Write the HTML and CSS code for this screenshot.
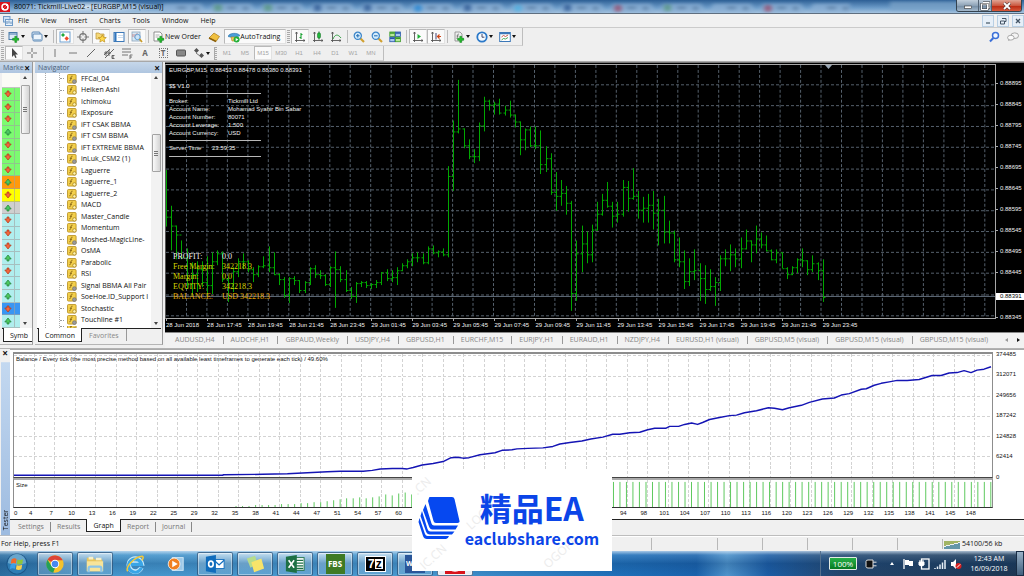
FILE: index.html
```html
<!DOCTYPE html>
<html lang="en">
<head>
<meta charset="utf-8">
<title>80071: Tickmill-Live02 - [EURGBP,M15 (visual)]</title>
<link rel="stylesheet" href="styles.css">
</head>
<body>
<svg class="defs" aria-hidden="true">
  <defs>
    <symbol id="fx" viewBox="0 0 10 10"><rect x=".5" y=".5" width="8.6" height="8.6" rx="1" fill="#f3cf4c" stroke="#b58d1c" stroke-width=".8"/><path d="M5.6 2.2c-1.4-.5-1.5.8-1.7 2.2S3.400 7.200 2.300 6.800M2.800 4.300h2.200" fill="none" stroke="#7a5a10" stroke-width=".8"/><circle cx="7.400" cy="7.400" r="1.700" fill="#fff3b0" stroke="#a07c18" stroke-width=".7"/></symbol>
    <symbol id="fxg" viewBox="0 0 10 10"><rect x=".5" y=".5" width="8.600" height="8.600" rx="1" fill="#f3cf4c" stroke="#b58d1c" stroke-width=".8"/><path d="M5.600 2.200c-1.400-.5-1.500.8-1.700 2.200S3.400 7.200 2.300 6.800M2.800 4.300h2.200" fill="none" stroke="#7a5a10" stroke-width=".8"/><circle cx="7.400" cy="7.600" r="1.900" fill="#9a9a9a" stroke="#6d6d6d" stroke-width=".6"/></symbol>
    <symbol id="dn" viewBox="0 0 8 8"><path d="M3 1h2v2h2.200L4 7 .8 3H3z" fill="#f4663c" stroke="#b03818" stroke-width=".7"/></symbol>
    <symbol id="up" viewBox="0 0 8 8"><path d="M3 7h2V5h2.200L4 1 .8 5H3z" fill="#4cc860" stroke="#1f8038" stroke-width=".7"/></symbol>
    <symbol id="plus" viewBox="0 0 12 12"><path d="M4.500 1h3v3.500H11v3H7.500V11h-3V7.500H1v-3h3.500z" fill="#22c02c" stroke="#0c7a16" stroke-width=".8"/></symbol>
    <symbol id="axes" viewBox="0 0 12 12"><path d="M2.500 1v10M1 9.500h10M1.500 2.500l1-1.500 1 1.500M9.500 8.500l1.500 1-1.500 1" fill="none" stroke="#555" stroke-width=".9"/></symbol>
  </defs>
</svg>

<div class="window">
  <header class="titlebar">
    <svg class="glass" viewBox="0 0 1024 14" preserveAspectRatio="none" aria-hidden="true">
      <defs><pattern id="tabs" x="158" width="50" height="14" patternUnits="userSpaceOnUse"><path d="M1 14L5 4h38l5 10z" fill="#8fb2d6"/><path d="M19 7h9v3h-9zM35 7h5v4h-5z" fill="#5f7fa3"/></pattern></defs>
      <g class="soft"><rect x="158" width="692" height="14" fill="url(#tabs)"/>
      <path d="M890 2h70v9h-70z" fill="#7ba3c8"/>
      <g fill="#2c5590"><rect x="314" y="5" width="7" height="7"/><rect x="364" y="5" width="7" height="7"/><rect x="464" y="5" width="7" height="7"/><rect x="564" y="5" width="7" height="7"/></g>
      <g fill="#5c9a7c"><rect x="214" y="5" width="8" height="7"/><rect x="264" y="5" width="8" height="7"/><rect x="664" y="5" width="7" height="7"/></g>
      <circle cx="418" cy="9" r="4" fill="#2388d8"/><circle cx="518" cy="9" r="4" fill="#51b7e8"/><circle cx="768" cy="9" r="4" fill="#a04a68"/><circle cx="618" cy="9" r="4" fill="#a04a68"/></g>
    </svg>
    <svg class="applogo" viewBox="0 0 10 10" aria-hidden="true"><rect width="10" height="10" fill="#d8141c"/><circle cx="5" cy="5" r="3" fill="none" stroke="#fff" stroke-width="1.500"/><path d="M5 5l3-3M5 5L2.500 7.500" stroke="#fff"/><circle cx="5" cy="5" r="1" fill="#d8141c"/></svg>
    <h1 class="title">80071: Tickmill-Live02 - [EURGBP,M15 (visual)]</h1>
    <div class="winbtns">
      <button class="wb wmin" aria-label="Minimize"><svg viewBox="0 0 12 10"><rect x="2.500" y="5" width="7" height="2.500" fill="#fff" stroke="#333" stroke-width=".6"/></svg></button>
      <button class="wb wmax" aria-label="Restore"><svg viewBox="0 0 12 10"><path d="M4 1.500h6v5.500H8.500M2.500 3h6v5.500h-6z" fill="none" stroke="#333" stroke-width="2"/><path d="M4 1.500h6v5.500H8.500M2.500 3h6v5.500h-6z" fill="none" stroke="#fff" stroke-width="1.100"/></svg></button>
      <button class="wb wclose" aria-label="Close"><svg viewBox="0 0 12 10"><path d="M3 2l6 6M9 2L3 8" stroke="#433" stroke-width="3"/><path d="M3 2l6 6M9 2L3 8" stroke="#fff" stroke-width="1.800"/></svg></button>
    </div>
  </header>

  <nav class="menubar" aria-label="Main menu">
    <svg class="menuicon" viewBox="0 0 10 10" aria-hidden="true"><rect x=".5" y=".5" width="6.500" height="5.500" fill="#cfe2f5" stroke="#6f9bc8"/><rect x="2.500" y="3.500" width="7" height="6" fill="#e9f3fc" stroke="#6f9bc8"/><path d="M4 5v3M6 4.500v3M8 5.500v2.500" stroke="#3a6ea8" stroke-width=".8"/></svg>
    <button>File</button><button>View</button><button>Insert</button><button>Charts</button><button>Tools</button><button>Window</button><button>Help</button>
    <div class="mdi"><button aria-label="Minimize chart"><svg viewBox="0 0 10 10"><path d="M3 7h4" stroke="#456" stroke-width="1.200"/></svg></button><button aria-label="Restore chart"><svg viewBox="0 0 10 10"><path d="M4 2.500h4v3H7M2.500 5h4v3h-4z" fill="none" stroke="#456"/></svg></button><button aria-label="Close chart"><svg viewBox="0 0 10 10"><path d="M3 3l4 4M7 3L3 7" stroke="#456" stroke-width="1.300"/></svg></button></div>
  </nav>

  <div class="toolbar t1">
    <div class="strip">
      <i class="grip"></i>
      <button class="tb dd" aria-label="New chart"><svg viewBox="0 0 12 12"><rect x="1" y="1.500" width="8" height="7" fill="#dcebf8" stroke="#4a7ba8"/><path d="M1 3h8" stroke="#4a7ba8"/><use href="#plus" x="4" y="4.500" width="7.500" height="7.500"/></svg></button>
      <button class="tb dd" aria-label="Profiles"><svg viewBox="0 0 12 12"><rect x="1" y="1" width="8" height="6" rx="1" fill="#d7e6f5" stroke="#5c88b5"/><rect x="2" y="3" width="9" height="7" rx="1" fill="#edf5fc" stroke="#5c88b5"/><path d="M3 9h7" stroke="#86aacd" stroke-width="1.500"/></svg></button>
      <i class="sep"></i>
      <button class="tb on" aria-label="Market Watch"><svg viewBox="0 0 12 12"><rect x="1" y="1" width="10" height="10" fill="#fff" stroke="#6fa0d0"/><path d="M2 4l2-2 2 2-2 2z" fill="#20a83c"/><path d="M5.500 7.500l2.200-2.200 2.200 2.200-2.200 2.200z" fill="#f04828"/></svg></button>
      <button class="tb" aria-label="Data Window"><svg viewBox="0 0 12 12"><circle cx="6" cy="6" r="3.300" fill="none" stroke="#777" stroke-width="1.200"/><path d="M6 0v4.500M6 7.500V12M0 6h4.500M7.500 6H12" stroke="#777" stroke-width="1.100"/></svg></button>
      <button class="tb on" aria-label="Navigator"><svg viewBox="0 0 12 12"><path d="M1 2h3l1 1h4v5H1z" fill="#f5d878" stroke="#b8923a" stroke-width=".7"/><path d="M7.300 3.800l1.200 2.500 2.800.3-2.100 1.800.6 2.700-2.500-1.400-2.500 1.400.6-2.700-2.100-1.800 2.800-.3z" fill="#ffd84a" stroke="#b0820e" stroke-width=".6"/></svg></button>
      <button class="tb" aria-label="Terminal"><svg viewBox="0 0 12 12"><rect x="1" y="1.500" width="10" height="9" fill="#fff" stroke="#3c78b8"/><path d="M1.500 2h2v8h-2z" fill="#2f74bd"/><path d="M5 4.500h5M5 6.500h5" stroke="#cde"/></svg></button>
      <button class="tb on" aria-label="Strategy Tester"><svg viewBox="0 0 12 12"><rect x="1" y="1" width="8" height="9" fill="#d8e8f4" stroke="#8ba4bc" stroke-width=".8"/><path d="M2 6V3M4 7V3M6 5V2" stroke="#c86a6a" stroke-width=".7"/><circle cx="6.500" cy="6" r="2.700" fill="#c8e4fa" fill-opacity=".8" stroke="#5c9ad0" stroke-width=".9"/><path d="M8.500 8l2.500 3" stroke="#c89a28" stroke-width="1.800"/></svg></button>
      <i class="sep"></i>
      <button class="tb txt"><svg viewBox="0 0 12 12"><path d="M1 1h6l2 2v7H1z" fill="#fff" stroke="#777" stroke-width=".8"/><path d="M2.500 4h4M2.500 6h3" stroke="#999" stroke-width=".8"/><use href="#plus" x="4" y="4.500" width="7.500" height="7.500"/></svg>New Order</button>
      <button class="tb gold" aria-label="MetaEditor"><svg viewBox="0 0 12 12"><path d="M1 7l5-5 5.500 3.500L8 10.500z" fill="#f0c040" stroke="#a87814" stroke-width=".7"/><path d="M1 7l7 3.500" stroke="#8a5f0c" stroke-width="1.500"/></svg></button>
      <button class="tb txt on auto"><svg viewBox="0 0 12 12"><path d="M0 5.500C1 2 9 1 12 4.500L7 7z" fill="#4a9ed8" stroke="#2a6ea8" stroke-width=".6"/><path d="M3 6h6v4H4z" fill="#f0c95a" stroke="#a8842a" stroke-width=".6"/><circle cx="8.600" cy="8.600" r="3" fill="#22b038"/><path d="M7.700 7l2.600 1.600-2.600 1.600z" fill="#fff"/></svg>AutoTrading</button>
      <i class="grip"></i>
      <button class="tb on" aria-label="Bar Chart"><svg viewBox="0 0 12 12"><use href="#axes"/><path d="M7 2v6M5.500 6.500H7M7 3.500h1.500" stroke="#18a030" stroke-width="1.100"/></svg></button>
      <button class="tb" aria-label="Candlesticks"><svg viewBox="0 0 12 12"><use href="#axes"/><path d="M7 .5v8" stroke="#106a20"/><rect x="5.500" y="2" width="3" height="5" rx="1" fill="#20b83a" stroke="#106a20" stroke-width=".5"/></svg></button>
      <button class="tb" aria-label="Line Chart"><svg viewBox="0 0 12 12"><use href="#axes"/><path d="M3 8c2-5 5-5 8-1" fill="none" stroke="#38a048"/></svg></button>
      <i class="sep"></i>
      <button class="tb" aria-label="Zoom In"><svg viewBox="0 0 12 12"><path d="M7 7l4 4" stroke="#d0a030" stroke-width="2.200"/><circle cx="4.800" cy="4.800" r="3.600" fill="#d5ecfb" stroke="#3b84c8" stroke-width="1.200"/><path d="M3 4.800h3.600M4.800 3v3.600" stroke="#2a72b8" stroke-width="1.100"/></svg></button>
      <button class="tb" aria-label="Zoom Out"><svg viewBox="0 0 12 12"><path d="M7 7l4 4" stroke="#d0a030" stroke-width="2.200"/><circle cx="4.800" cy="4.800" r="3.600" fill="#d5ecfb" stroke="#3b84c8" stroke-width="1.200"/><path d="M3 4.800h3.600" stroke="#2a72b8" stroke-width="1.100"/></svg></button>
      <button class="tb" aria-label="Tile Windows"><svg viewBox="0 0 12 12"><g stroke-width=".8"><rect x=".8" y="1" width="5" height="4.500" fill="#b8e89a" stroke="#3b9a28"/><rect x="6.400" y="1" width="5" height="4.500" fill="#a8c8f0" stroke="#2858a8"/><rect x=".8" y="6.200" width="5" height="4.500" fill="#a8c8f0" stroke="#2858a8"/><rect x="6.400" y="6.200" width="5" height="4.500" fill="#b8e89a" stroke="#3b9a28"/></g><path d="M1 2h4.600M6.600 7.200h4.600" stroke="#3b9a28" stroke-width="1.500"/><path d="M6.600 2h4.600M1 7.200h4.600" stroke="#2858a8" stroke-width="1.500"/></svg></button>
      <i class="sep"></i>
      <button class="tb on" aria-label="Auto Scroll"><svg viewBox="0 0 12 12"><use href="#axes"/><path d="M5.500 3v5L9 5.500z" fill="#20b038"/></svg></button>
      <button class="tb on" aria-label="Chart Shift"><svg viewBox="0 0 12 12"><use href="#axes"/><path d="M6 2v6.500" stroke="#447"/><path d="M11 5.500H8M9.500 3.500l-2 2 2 2" fill="none" stroke="#d04818" stroke-width="1.200"/></svg></button>
      <i class="sep"></i>
      <button class="tb dd" aria-label="Indicators"><svg viewBox="0 0 12 12"><path d="M2 1h5l2 2v7H2z" fill="#eee" stroke="#888" stroke-width=".8"/><path d="M6 3c-2-.5-1 4-2.500 5M3.500 5h2" fill="none" stroke="#666" stroke-width=".8"/><use href="#plus" x="4" y="4.500" width="7.500" height="7.500"/></svg></button>
      <button class="tb dd" aria-label="Periods"><svg viewBox="0 0 12 12"><circle cx="6" cy="6" r="4.700" fill="#f4faff" stroke="#2a78c8" stroke-width="1.800"/><path d="M6 3v3.200h2.400" fill="none" stroke="#335" stroke-width=".9"/></svg></button>
      <button class="tb dd" aria-label="Templates"><svg viewBox="0 0 12 12"><rect x=".7" y="1.500" width="10.600" height="9" fill="#fff" stroke="#3c78b8"/><path d="M1 2.500h10" stroke="#3c78b8" stroke-width="1.500"/><path d="M2.500 6l2-1.500 2 1 2.500-1.500" fill="none" stroke="#c04838" stroke-width=".9"/><path d="M2.500 9l2-1.500 2 .5 2.500-1.500" fill="none" stroke="#38a048" stroke-width=".9"/></svg></button>
    </div>
    <div class="right">
      <button class="tb" aria-label="Search"><svg viewBox="0 0 12 12"><circle cx="7.500" cy="4.500" r="3" fill="#eef6ff" stroke="#3a6fd8" stroke-width="1.500"/><path d="M5.300 7L2 10.500" stroke="#3a6fd8" stroke-width="2"/></svg></button>
      <button class="tb" aria-label="Chat"><svg viewBox="0 0 14 12"><ellipse cx="9" cy="4.500" rx="4.500" ry="3.300" fill="#f3f3f3" stroke="#888" stroke-width=".8"/><path d="M2 10.500L3 8" stroke="#888"/><ellipse cx="4.500" cy="6.800" rx="3.800" ry="2.800" fill="#fafafa" stroke="#888" stroke-width=".8"/></svg></button>
    </div>
  </div>

  <div class="toolbar t2">
    <div class="strip">
      <i class="grip"></i>
      <button class="tb on" aria-label="Cursor"><svg viewBox="0 0 12 12"><path d="M4 1v9l2-2 1.300 3 1.300-.6L7.300 7.500H10z" fill="#444"/></svg></button>
      <button class="tb" aria-label="Crosshair"><svg viewBox="0 0 12 12"><path d="M6 1v4M6 7v4M1 6h4M7 6h4" stroke="#777" stroke-width="1.100"/></svg></button>
      <i class="sep"></i>
      <button class="tb" aria-label="Vertical Line"><svg viewBox="0 0 12 12"><path d="M6 2v8" stroke="#777"/></svg></button>
      <button class="tb" aria-label="Horizontal Line"><svg viewBox="0 0 12 12"><path d="M2 6h8" stroke="#777"/></svg></button>
      <button class="tb" aria-label="Trendline"><svg viewBox="0 0 12 12"><path d="M2 10l8-8" stroke="#666"/></svg></button>
      <button class="tb" aria-label="Equidistant Channel"><svg viewBox="0 0 12 12"><path d="M1 8l6-6M2 11l9-9M3 4v5M6 3v6M1 6h7M9 8.500h2.500M9 11.500h2.500M9 10h2M9 8.500v3" fill="none" stroke="#555" stroke-width=".9"/></svg></button>
      <button class="tb" aria-label="Fibonacci"><svg viewBox="0 0 12 12"><path d="M1 2h9M1 5h9M1 8h6M9 12V8h2.500M9 10h2" fill="none" stroke="#666" stroke-width=".9" /></svg></button>
      <button class="tb letter">A</button>
      <button class="tb letter"><span class="boxed">T</span></button>
      <button class="tb" aria-label="Rectangle"><svg viewBox="0 0 12 12"><rect x="1.500" y="3" width="9" height="6" rx="1" fill="#888" stroke="#555"/></svg></button>
      <button class="tb dd" aria-label="Arrows"><svg viewBox="0 0 12 12"><path d="M1 3.500L3.500 1 6 3.500 3.500 6zM6 8.500L8.500 6 11 8.500 8.500 11z" fill="#555"/><path d="M3 6l4 3" stroke="#777"/></svg></button>
      <i class="grip gap"></i>
      <button class="tb tf">M1</button><button class="tb tf">M5</button><button class="tb tf on">M15</button><button class="tb tf">M30</button><button class="tb tf">H1</button><button class="tb tf">H4</button><button class="tb tf">D1</button><button class="tb tf">W1</button><button class="tb tf">MN</button>
    </div>
  </div>

  <main class="work">
    <section class="panel market" aria-label="Market Watch">
      <div class="phead"><span>Marke</span><button aria-label="Close Market Watch">×</button></div>
      <div class="plist">
        <div class="rows" id="market"></div>
        <div class="scroll"><i class="arrow up"></i><i class="thumb mthumb"></i><i class="arrow down"></i></div>
      </div>
      <div class="ptabs"><button class="ptab on">Symb</button></div>
    </section>

    <section class="panel navigator" aria-label="Navigator">
      <div class="phead"><span>Navigator</span><button aria-label="Close Navigator">×</button></div>
      <div class="plist">
        <ul class="tree">
          <li><svg><use href="#fxg"/></svg>FFCal_04</li>
          <li><svg><use href="#fx"/></svg>Heiken Ashi</li>
          <li><svg><use href="#fx"/></svg>Ichimoku</li>
          <li><svg><use href="#fx"/></svg>iExposure</li>
          <li><svg><use href="#fxg"/></svg>iFT CSAK BBMA</li>
          <li><svg><use href="#fxg"/></svg>iFT CSM BBMA</li>
          <li><svg><use href="#fxg"/></svg>iFT EXTREME BBMA</li>
          <li><svg><use href="#fxg"/></svg>inLuk_CSM2 (1)</li>
          <li><svg><use href="#fx"/></svg>Laguerre</li>
          <li><svg><use href="#fx"/></svg>Laguerre_1</li>
          <li><svg><use href="#fx"/></svg>Laguerre_2</li>
          <li><svg><use href="#fx"/></svg>MACD</li>
          <li><svg><use href="#fx"/></svg>Master_Candle</li>
          <li><svg><use href="#fx"/></svg>Momentum</li>
          <li><svg><use href="#fxg"/></svg>Moshed-MagicLine-</li>
          <li><svg><use href="#fx"/></svg>OsMA</li>
          <li><svg><use href="#fx"/></svg>Parabolic</li>
          <li><svg><use href="#fx"/></svg>RSI</li>
          <li><svg><use href="#fxg"/></svg>Signal BBMA All Pair</li>
          <li><svg><use href="#fxg"/></svg>SoeHoe.ID_Support I</li>
          <li><svg><use href="#fx"/></svg>Stochastic</li>
          <li><svg><use href="#fxg"/></svg>Touchline #1</li>
          <li><svg><use href="#fxg"/></svg></li>
        </ul>
        <div class="scroll"><i class="arrow up"></i><i class="thumb nthumb"></i><i class="arrow down"></i></div>
      </div>
      <div class="ptabs"><button class="ptab on">Common</button><button class="ptab">Favorites</button></div>
    </section>

    <section class="chartarea" aria-label="EURGBP chart">
      <div class="chart">
        <div class="plot">
          <svg id="price" viewBox="0 0 829 255" preserveAspectRatio="none" role="img" aria-label="EURGBP M15 price bars"></svg>
          <div class="info">
            <p>EURGBP,M15&nbsp; 0.88453 0.88478 0.88380 0.88391</p>
            <p class="ver">$$ V1.0</p>
            <hr>
            <dl><dt>Broker:</dt><dd>Tickmill Ltd</dd><dt>Account Name:</dt><dd>Mohamad Syahir Bin Sabar</dd><dt>Account Number:</dt><dd>80071</dd><dt>Account Leverage:</dt><dd>1:500</dd><dt>Account Currency:</dt><dd>USD</dd></dl>
            <hr>
            <dl class="time"><dt>Server Time</dt><dd>23:59:35</dd></dl>
            <hr>
          </div>
          <dl class="profit"><dt class="w">PROFIT:</dt><dd class="w">0.0</dd><dt>Free Margin:</dt><dd>342218.3</dd><dt>Margin:</dt><dd>0.0</dd><dt>EQUITY:</dt><dd>342218.3</dd><dt class="o">BALANCE:</dt><dd class="o">USD 342218.3</dd></dl>
        </div>
        <div class="yaxis"><span>0.88895</span><span>0.88845</span><span>0.88795</span><span>0.88745</span><span>0.88695</span><span>0.88645</span><span>0.88595</span><span>0.88545</span><span>0.88495</span><span>0.88445</span><span class="cur"><b>0.88391</b></span><span>0.88345</span></div>
        <div class="xaxis"><span>28 Jun 2018</span><span>28 Jun 17:45</span><span>28 Jun 19:45</span><span>28 Jun 21:45</span><span>28 Jun 23:45</span><span>29 Jun 01:45</span><span>29 Jun 03:45</span><span>29 Jun 05:45</span><span>29 Jun 07:45</span><span>29 Jun 09:45</span><span>29 Jun 11:45</span><span>29 Jun 13:45</span><span>29 Jun 15:45</span><span>29 Jun 17:45</span><span>29 Jun 19:45</span><span>29 Jun 21:45</span><span>29 Jun 23:45</span></div>
      </div>
      <div class="ctabs">
        <button>AUDUSD,H4</button><button>AUDCHF,H1</button><button>GBPAUD,Weekly</button><button>USDJPY,H4</button><button>GBPUSD,H1</button><button>EURCHF,M15</button><button>EURJPY,H1</button><button>EURAUD,H1</button><button>NZDJPY,H4</button><button>EURUSD,H1 (visual)</button><button>GBPUSD,M5 (visual)</button><button>GBPUSD,M15 (visual)</button><button>GBPUSD,M15 (visual)</button>
        <span class="ctnav"><i class="al"></i><i class="ar"></i></span>
      </div>
    </section>
  </main>

  <section class="tester" aria-label="Strategy Tester">
    <div class="tside"><button aria-label="Close Tester">×</button><span>Tester</span></div>
    <div class="tbody">
      <div class="graph">
        <div class="balance"><svg id="balance" viewBox="0 0 980 126" preserveAspectRatio="none" role="img" aria-label="Balance graph"></svg><p>Balance / Every tick (the most precise method based on all available least timeframes to generate each tick) / 49.60%</p></div>
        <div class="bscale"><span>374485</span><span>312071</span><span>249656</span><span>187242</span><span>124828</span><span>62414</span><span>0</span></div>
        <div class="size"><svg id="size" viewBox="0 0 980 28" preserveAspectRatio="none" role="img" aria-label="Size graph"></svg><p>Size</p></div>
        <div class="ticks" id="ticks"></div>
      </div>
      <div class="ttabs"><button>Settings</button><button>Results</button><button class="on">Graph</button><button>Report</button><button>Journal</button></div>
    </div>
  </section>

  <footer class="status">
    <span class="help">For Help, press F1</span><i class="wide"></i><i></i><i></i><i></i><i></i><i></i>
    <span class="conn"><svg viewBox="0 0 16 9"><path d="M1 1v5M3 1v4M5 1v4M7 1v3M9 1v3M11 1v2M13 1v2M15 1v1" stroke="#7f9a28" stroke-width="1.400"/><path d="M1 7v2M3 6v3M5 6v3M7 5v4M9 5v4M11 4v5M13 4v5M15 3v6" stroke="#28708a" stroke-width="1.400"/></svg>54100/56 kb</span>
  </footer>

  <div class="taskbar">
    <button class="start" aria-label="Start"><svg viewBox="0 0 26 26"><circle cx="13" cy="13" r="11.500" fill="#1d5688"/><circle cx="13" cy="13" r="10.500" fill="#2f7db4"/><path d="M3 12a10 10 0 0 1 20 0q-10 4-20 0z" fill="#8fc1de" opacity=".6"/><path d="M7 8q3-2 5.500-.5L11.800 12.500q-3-1.500-5.500.3z" fill="#f06a2a"/><path d="M13.500 8q3 1.500 6-.2l-.8 5q-3 1.500-6 .2z" fill="#8cc63a"/><path d="M6 13.800q3-1.700 5.600-.4l-.8 4.800q-3-1.500-5.500.4z" fill="#38a0e8"/><path d="M12.600 14q3 1.500 6-.1l-.8 4.800q-3 1.700-6 .1z" fill="#fcd04a"/></svg></button>
    <button class="app" aria-label="Chrome"><svg viewBox="0 0 22 22"><circle cx="11" cy="11" r="9.500" fill="#f5c22c"/><path d="M11 11L2.800 6.200A9.500 9.500 0 0 1 19.500 7H11z" fill="#dc4437"/><path d="M11 11v4.500l-2 5A9.500 9.500 0 0 1 2.800 6.200L7 13z" fill="#22a05a"/><circle cx="11" cy="11" r="4.600" fill="#fff"/><circle cx="11" cy="11" r="3.600" fill="#4688f0"/></svg></button>
    <button class="app" aria-label="Explorer"><svg viewBox="0 0 22 22"><path d="M2 4h7l2 2h8v13H2z" fill="#e8c55c"/><path d="M4 3h5v3H4zM12 4h6v3h-6z" fill="#f6f0cc"/><path d="M2 8h18v11H2z" fill="#f8e49a"/><path d="M4 20v-4q0-2 2-2h10q2 0 2 2v4" fill="none" stroke="#8cc4e8" stroke-width="2.500"/></svg></button>
    <button class="app bare" aria-label="Internet Explorer"><svg viewBox="0 0 22 22"><path d="M18 15a7.200 7.200 0 1 1 .4-4.500H6.500" fill="none" stroke="#c8eafc" stroke-width="5"/><path d="M18 15a7.200 7.200 0 1 1 .2-3.500H6.500" fill="none" stroke="#3aa5e6" stroke-width="3.500"/><path d="M3 19C0 15 10 3 19 2.500c2 .5.500 3-.5 4.500" fill="none" stroke="#f4c838" stroke-width="1.600"/></svg></button>
    <button class="app bare" aria-label="Media Player"><svg viewBox="0 0 22 22"><rect x="8" y="4" width="12" height="14" fill="#9cc8e8" stroke="#d5ebf8"/><circle cx="10" cy="11" r="6.500" fill="#f08022" stroke="#fff" stroke-width=".8"/><path d="M8 7.500l6 3.500-6 3.500z" fill="#fff"/></svg></button>
    <button class="app" aria-label="Outlook"><svg viewBox="0 0 22 22"><rect x="10" y="6" width="11" height="10" fill="#fff" stroke="#1470c0"/><path d="M10 7l5.500 5L21 7" fill="none" stroke="#1470c0" stroke-width="1.500"/><path d="M1 3l11-2v20L1 19z" fill="#0f6cbc"/><ellipse cx="6.500" cy="11" rx="2.500" ry="3.200" fill="none" stroke="#fff" stroke-width="1.800"/></svg></button>
    <button class="app" aria-label="Sticky Notes"><svg viewBox="0 0 22 22"><path d="M2 5l9-3 3 9-8 4z" fill="#b6dc8c"/><path d="M7 9l11-4 3 11-11 4z" fill="#f8e46a"/></svg></button>
    <button class="app" aria-label="Excel"><svg viewBox="0 0 22 22"><rect x="10" y="4" width="11" height="14" fill="#fff" stroke="#1d7044"/><path d="M12 7h8M12 10h8M12 13h8M12 16h8" stroke="#1d7044" stroke-width="1.500"/><path d="M1 3l12-2v20L1 19z" fill="#1d7044"/><path d="M4 7l6 8M10 7l-6 8" stroke="#fff" stroke-width="1.800"/></svg></button>
    <button class="app"><span class="fbs">FBS</span></button>
    <button class="app"><span class="sevenz"><b>7</b><b>z</b></span></button>
    <button class="app"><span class="word">W</span></button>
    <button class="app red" aria-label="Tickmill terminal"><svg viewBox="0 0 22 22"><rect width="22" height="22" fill="#d8141c"/><circle cx="11" cy="11" r="7" fill="none" stroke="#fff" stroke-width="3"/></svg></button>
    <div class="tray">
      <span class="batt">100%</span>
      <svg class="plug" viewBox="0 0 14 12"><path d="M2 3.500q0-1.500 2-1.500h5v8H4q-2 0-2-1.500zM9 4.200h3.500M9 7.800h3.500" fill="#111" stroke="#ddd" stroke-width="1"/></svg>
      <i class="tup"></i>
      <svg viewBox="0 0 12 12"><path d="M2 1v10" stroke="#fff" stroke-width="1.300"/><path d="M3 2h4v1h4v5H7V7H3z" fill="#fff"/></svg>
      <svg viewBox="0 0 12 12"><rect x="3.500" y="1" width="7.500" height="10" fill="none" stroke="#fff" stroke-width="1.300"/><path d="M1 4h5v3q-2.500 2-5 0zM2 2v2M5 2v2M3.500 8v3" fill="#fff" stroke="#fff"/></svg>
      <svg viewBox="0 0 12 12"><path d="M1 10v1M3.500 8.500V11M6 6.500V11M8.500 4.500V11M11 2v9" stroke="#e8f0f8" stroke-width="1.500"/></svg>
      <svg viewBox="0 0 12 12"><path d="M1 4h2l3-3v10L3 8H1z" fill="#fff"/><circle cx="8.500" cy="8" r="3" fill="#d82020"/><path d="M6.800 9.700l3.400-3.400" stroke="#fff"/></svg>
      <time class="clock"><span>12:43 AM</span><span>16/09/2018</span></time>
      <button class="peek" aria-label="Show desktop"></button>
    </div>
  </div>

  <aside class="brand" aria-label="eaclubshare.com">
    <span class="wm a">.CN</span><span class="wm b">LOGO</span><span class="wm c">IC.CN</span><span class="wm d">OGOPP</span>
    <svg class="books" viewBox="0 0 42 44" aria-hidden="true"><g fill="#0648f0"><path d="M11 2Q11 1 12 1h22q2 0 2.500 2l5 22q.5 2-2 2H18q-2 0-2.500-2L10 5z"/><path d="M7.500 8l6 19.500q.6 2 2.500 2h24l-2.500 4H14.500q-2.500 0-3.500-3L5 14z"/><path d="M4 15l5.500 18q.8 2.500 3 2.500h24l-2.500 3H12q-3 0-4-3L2.500 20z"/><path d="M1.500 22l5.500 16q.8 2 2.500 2h21.500q-1 3-3 3H9q-3 0-4-3L.5 26z"/></g></svg>
    <div class="brandtext"><strong>精品EA</strong><span>eaclubshare.com</span></div>
  </aside>
</div>
<script src="app.js"></script>
</body>
</html>
```
FILE: styles.css
```css
* { box-sizing: border-box; margin: 0; padding: 0; }
html, body { height: 100%; }
body {
  font-family: "Open Sans", "Noto Sans", sans-serif;
  font-size: 7px;
  line-height: 10px;
  color: #111;
  background: #efefef;
  overflow: hidden;
}
button { font: inherit; color: inherit; background: none; border: 0; white-space: nowrap; }
ul { list-style: none; }
svg { display: block; }
.defs { position: absolute; width: 0; height: 0; }
.window { position: relative; display: flex; flex-direction: column; height: 100vh; }

/* title bar */
.titlebar { position: relative; flex: none; height: 14px; display: flex; align-items: center; gap: 4px; background: linear-gradient(#2d5f95, #6d9cc9 60%, #a5c3e0); border-bottom: 1px solid #5f6f80; overflow: hidden; }
.glass { position: absolute; inset: 0; width: 100%; height: 100%; }
.soft { filter: blur(2px); opacity: 0.7; }
.applogo { position: relative; width: 10px; height: 10px; }
.title { position: relative; font-size: 7px; font-weight: 400; line-height: 12px; color: #000; white-space: nowrap; background: radial-gradient(closest-side, rgba(222, 234, 246, 0.9), rgba(180, 205, 230, 0.55) 75%, transparent); }
.winbtns { position: relative; display: flex; align-self: flex-start; margin-left: auto; margin-right: 2px; border: 1px solid #34424f; border-top: 0; border-radius: 0 0 3px 3px; overflow: hidden; }
.wb { height: 11px; display: grid; place-items: center; background: linear-gradient(#c3d0dc, #8ea3b7 50%, #7189a0 51%, #a5bacd); }
.wb svg { width: 12px; height: 10px; }
.wmin { width: 21px; }
.wmax { width: 14px; border-left: 1px solid #526272; border-right: 1px solid #526272; }
.wclose { width: 29px; background: linear-gradient(#e0a494, #cb5a42 50%, #b8260f 51%, #d6583a); }

/* menu */
.menubar { flex: none; height: 14px; display: flex; align-items: center; border-bottom: 1px solid #cbcbcb; background: #f1f1f1; }
.menuicon { width: 10px; height: 10px; margin: 0 0 0 3px; }
.menubar > button { padding: 0 6px; }
.menubar > button:first-of-type { padding-left: 5px; }
.mdi { margin-left: auto; display: flex; gap: 3px; }
.mdi button { width: 12px; height: 12px; background: #e6eff8; border: 1px solid #b8cfe4; }
.mdi svg { width: 10px; height: 10px; }

/* toolbars */
.toolbar { flex: none; display: flex; justify-content: space-between; }
.t1 { height: 18px; }
.t2 { height: 16px; border-bottom: 1px solid #a8a8a8; }
.strip { display: flex; align-items: center; border-right: 1px solid #bdbdbd; border-bottom: 1px solid #d2d2d2; padding-right: 3px; }
.tb { width: 18px; height: 15px; display: flex; align-items: center; justify-content: center; gap: 1px; border: 1px solid transparent; }
.tb svg { width: 12px; height: 12px; flex: none; }
.tb.on { background: #fafafa; border-color: #b9b9b9 #e2e2e2 #e2e2e2 #b9b9b9; }
.tb.txt { width: auto; padding: 0 2px 0 1px; gap: 0; font-size: 7px; }
.tb.auto { width: 62px; }
.tb.gold { width: 20px; }
.dd { width: 23px; }
.dd::after { content: ""; border: 2px solid transparent; border-top: 3px solid #111; border-bottom: 0; }
.sep { width: 1px; height: 13px; margin: 0 2px; background: #bcbcbc; }
.grip { width: 3px; height: 13px; margin: 0 1px; background: repeating-linear-gradient(#aaa 0 1px, transparent 1px 2px); }
.grip.gap { border-left: 1px solid #aaa; }
.letter { font-weight: 700; font-size: 8px; color: #666; }
.boxed { border: 1px dotted #777; width: 9px; line-height: 8px; }
.tf { font-family: "Liberation Sans", sans-serif; font-size: 6px; color: #a5a5a5; }
.t2 .tb { height: 14px; }
.right { display: flex; align-items: center; gap: 1px; padding-right: 2px; }

/* workspace */
.work { flex: 287 1 0; min-height: 0; display: flex; gap: 2px; border-bottom: 1px solid #b2b2b2; }
.panel { flex: none; display: flex; flex-direction: column; margin-bottom: 3px; border-right: 1px solid #999; border-bottom: 1px solid #b5b5b5; background: #f0f0f0; min-height: 0; }
.market { width: 33px; overflow: hidden; }
.navigator { width: 128px; }
.phead { flex: none; height: 11px; display: flex; align-items: center; justify-content: space-between; padding: 0 2px 0 3px; background: linear-gradient(#c6d7ea, #afc6e0); color: #4a5f78; }
.phead button, .tside button { font-size: 10px; font-weight: 700; line-height: 8px; color: #111; }
.plist { flex: 1; min-height: 0; display: flex; background: #fff; border-bottom: 1px solid #222; }
.market .plist { margin-left: 2px; margin-right: 2px; }
.navigator .plist { margin: 0 1px 0 2px; }
.rows { flex: 1; min-width: 0; display: flex; flex-direction: column; overflow: hidden; }
.mrow { flex: 1 1 0; min-height: 0; display: grid; grid-template-columns: 12px 1fr; border-bottom: 1px solid rgba(160, 160, 160, 0.6); }
.mrow.head { flex: none; height: 15px; background: #fbfbf6; }
.mrow svg { width: 8px; height: 8px; margin: 2px 0 0 2px; }
.mrow span { border-left: 1px solid rgba(160, 160, 160, 0.6); }
.green { background: #7cfb70; } .orange { background: #ff9a0c; } .yellow { background: #ffff00; } .grey { background: #cfcfcf; } .cyan { background: #b0eeee; } .blue { background: #3996f2; }
.scroll { flex: none; width: 10px; display: flex; flex-direction: column; align-items: center; background: #f2f2f2; padding: 3px 0; }
.arrow { border: 2px solid transparent; }
.arrow.up { border-top: 0; border-bottom: 3px solid #444; }
.arrow.down { margin-top: auto; border-bottom: 0; border-top: 3px solid #444; }
.thumb { width: 9px; border: 1px solid #a3a3a3; border-radius: 1px; background: repeating-linear-gradient(#777 0 1px, transparent 1px 2px) center / 4px 5px no-repeat, linear-gradient(90deg, #fafafa, #d4d4d4); }
.mthumb { margin-top: 6px; height: 49px; }
.nthumb { margin-top: 55px; height: 38px; }
.tree { flex: 1; min-width: 0; display: grid; grid-template-rows: repeat(22, minmax(0, 1fr)) 2px; overflow: hidden; background: repeating-linear-gradient(#aaa 0 1px, transparent 1px 2px) 8px 0 / 1px 100% no-repeat, repeating-linear-gradient(#aaa 0 1px, transparent 1px 2px) 22px 0 / 1px 100% no-repeat; }
.tree li { display: flex; align-items: center; gap: 4px; padding-left: 23px; white-space: nowrap; overflow: hidden; }
.tree li::before { content: ""; width: 4px; border-top: 1px dotted #999; }
.tree svg { flex: none; width: 10px; height: 10px; margin-left: -1px; }
.ptabs { flex: none; height: 15px; display: flex; align-items: flex-start; padding-left: 3px; }
.ptab { height: 12px; padding: 0 7px; color: #888; border-right: 1px solid #999; line-height: 14px; }
.ptab.on { height: 14px; margin-top: -1px; padding: 0 6px; background: #fff; color: #111; border: 1px solid #222; border-top: 0; line-height: 15px; }

/* price chart */
.chartarea { flex: 1; min-width: 0; display: flex; flex-direction: column; }
.chart { flex: 1; min-height: 0; display: grid; grid-template-columns: 1fr 27px; grid-template-rows: 1fr 13px; padding: 1px 1px 0 0; background: #000; border-top: 1px solid #777; font-family: "Liberation Sans", sans-serif; font-size: 6px; color: #f0f0f0; }
.plot { position: relative; min-width: 0; min-height: 0; border: 1px solid #a8a8a8; border-left-color: #555; }
.plot > svg { position: absolute; inset: 0; width: 100%; height: 100%; }
.gridl { stroke: #56616d; stroke-width: 1; stroke-dasharray: 3 2; fill: none; shape-rendering: crispEdges; }
.bars { stroke: #00a800; stroke-width: 1; fill: none; shape-rendering: crispEdges; }
.priceline { stroke: #5e6a78; }
.info { position: relative; width: 138px; padding: 1px 0 0 3px; line-height: 8px; }
.info p, .info dd, .info dt { white-space: nowrap; }
.info .ver { margin: 8px 0 3px; }
.info hr { width: 92px; border: 0; border-top: 1px solid #b8b8b8; margin-bottom: 3px; }
.info dl { display: grid; grid-template-columns: 59px 1fr; margin-bottom: 3px; }
.info .time { grid-template-columns: 43px 1fr; margin-bottom: 4px; }
.profit { position: absolute; left: 7px; bottom: 16px; display: grid; grid-template-columns: 49px auto; font-family: "Liberation Serif", serif; font-size: 8px; line-height: 10px; color: #d8d800; }
.profit .w { color: #f0f0f0; }
.profit .o { color: #e6a800; }
.yaxis { display: flex; flex-direction: column; padding-top: 9px; margin-bottom: -9px; }
.yaxis span { flex: 1 1 0; min-height: 0; display: flex; align-items: center; line-height: 7px; }
.yaxis span::before { content: ""; width: 2px; margin-right: 2px; border-top: 1px solid #aaa; }
.yaxis .cur { padding-top: 3px; }
.yaxis .cur::before { display: none; }
.yaxis b { font-weight: 400; background: #fff; color: #000; padding: 0 2px 0 4px; }
.xaxis { display: flex; line-height: 13px; padding-left: 1px; margin-right: -1px; }
.xaxis span { flex: 0 0 4.94%; position: relative; white-space: nowrap; }
.xaxis span::before { content: ""; display: block; position: absolute; top: -1px; left: 0; height: 3px; border-left: 1px solid #aaa; }
.ctabs { flex: none; height: 16px; display: flex; align-items: center; background: #f2f2f2; border-top: 1px solid #888; padding-left: 3px; color: #868686; overflow: hidden; }
.ctabs button { padding: 0 8px 0 7px; border-right: 1px solid #999; line-height: 8px; }
.ctabs button:last-of-type { border-right: 0; padding-right: 0; }
.ctnav { margin-left: auto; display: flex; gap: 9px; padding-right: 4px; }
.al, .ar { border: 2px solid transparent; }
.al { border-right: 3px solid #999; border-left: 0; }
.ar { border-left: 3px solid #111; border-right: 0; }

/* tester */
.tester { flex: 187 1 0; min-height: 0; display: flex; border-bottom: 1px solid #bdbdbd; background: #f0f0f0; }
.tside { flex: none; width: 10px; display: flex; flex-direction: column; align-items: center; }
.tside span { flex: 1; margin-top: 5px; width: 9px; writing-mode: vertical-rl; transform: rotate(180deg); line-height: 9px; background: linear-gradient(#9dbbe0, #c3d8f0); padding-top: 5px; white-space: nowrap; }
.tbody { flex: 1; min-width: 0; display: flex; flex-direction: column; }
.graph { flex: 1; min-height: 0; display: grid; grid-template-columns: 1fr 28px; grid-template-rows: 1fr 30px 11px; padding: 2px 3px 0 3px; background: #fff; border-top: 1px solid #aaa; border-bottom: 1px solid #222; font-family: "Liberation Sans", sans-serif; font-size: 6px; line-height: 8px; }
.balance, .size { position: relative; min-height: 0; border: 1px solid #8d8d8d; border-top-width: 2px; }
.balance { border-bottom-color: #444; }
.size { grid-column: 1; border-bottom-color: #333; border-top-color: #aaa; }
.balance svg, .size svg { position: absolute; inset: 0; width: 100%; height: 100%; }
.balance p, .size p { position: relative; padding: 1px 0 0 2px; white-space: nowrap; }
.lightgrid { stroke: #d2d2d2; stroke-width: 1; stroke-dasharray: 3 2; fill: none; shape-rendering: crispEdges; }
.curve { stroke: #1414b4; stroke-width: 1.5px; fill: none; stroke-linejoin: round; }
.lots { stroke: #5cc85c; fill: none; }
.bscale { display: flex; flex-direction: column; justify-content: space-between; margin: -1px 0 -3px; padding-left: 3px; }
.bscale span { line-height: 7px; }
.ticks { grid-column: 1; display: grid; grid-template-columns: repeat(48, minmax(0, 1fr)); margin-left: -13px; margin-right: 12px; text-align: center; line-height: 10px; }
.ticks span:first-child { text-align: right; padding-right: 3px; }
.ttabs { flex: none; height: 15px; display: flex; align-items: flex-start; padding-left: 2px; color: #777; }
.ttabs button { height: 10px; margin-top: 2px; padding: 0 6px; border-right: 1px solid #888; }
.ttabs .on { height: 13px; margin-top: -1px; padding: 0 6px; line-height: 14px; background: #fff; color: #111; border: 1px solid #222; border-top: 0; }
.ttabs button:nth-child(2) { border-right: 0; }

/* status bar */
.status { flex: none; height: 15px; display: flex; align-items: center; background: #f0f0f0; border-top: 1px solid #fff; }
.status i { width: 45px; height: 12px; border-left: 1px solid #b8b8b8; }
.status .wide { width: 66px; }
.help { margin-right: auto; padding-left: 1px; }
.conn { display: flex; align-items: center; gap: 2px; width: 82px; padding-left: 1px; border-left: 1px solid #b8b8b8; }
.conn svg { width: 16px; height: 9px; }

/* taskbar */
.taskbar { flex: none; height: 25px; display: flex; align-items: center; gap: 4px; background: linear-gradient(rgba(215, 232, 248, 0.75), rgba(160, 195, 225, 0.2) 16%, rgba(15, 60, 110, 0.25) 50%, transparent), linear-gradient(90deg, #2c6ea0, #4596cc 10%, #4a9ad0 40%, #1f70ba 60%, #1a62ac 68%, #4f94cc 71%, #1c5ca4 75%, #24466c 82%, #1d3550); overflow: hidden; }
.start { flex: none; width: 33px; height: 25px; display: grid; place-items: center; }
.start svg { width: 24px; height: 24px; }
.app { flex: none; width: 36px; height: 24px; display: grid; place-items: center; border: 1px solid rgba(30, 70, 110, 0.7); border-radius: 2px; background: linear-gradient(rgba(255, 255, 255, 0.6), rgba(255, 255, 255, 0.25) 45%, rgba(255, 255, 255, 0.12)); box-shadow: inset 0 0 0 1px rgba(255, 255, 255, 0.4); }
.app.bare { border-color: transparent; background: none; box-shadow: none; }
.app svg { width: 20px; height: 20px; }
.fbs { width: 19px; height: 20px; line-height: 20px; background: #3f7a24; color: #fff; font-weight: 700; font-size: 8px; }
.sevenz { display: flex; width: 21px; height: 16px; padding: 2px; background: #000; border: 1px solid #fff; font-family: "Liberation Sans", sans-serif; font-size: 12px; line-height: 10px; color: #fff; }
.sevenz b { flex: 1; }
.sevenz b + b { background: #fff; color: #000; }
.word { width: 20px; height: 18px; padding-left: 1px; line-height: 18px; text-align: left; background: #2a5699; color: #fff; font-weight: 700; font-size: 7px; }
.app.red { background: #e8eef4; }
.tray { margin-left: auto; display: flex; align-items: center; gap: 4px; height: 25px; padding-left: 8px; border-left: 1px solid #54708e; color: #fff; }
.tray svg { width: 12px; height: 12px; }
.batt { width: 28px; height: 13px; line-height: 11px; font-size: 8px; text-align: center; background: linear-gradient(#28b048, #067a22); border: 1px solid #e4ece4; border-radius: 1px; }
.tray .plug { width: 14px; margin: 0 8px 0 3px; }
.tup { border: 2px solid transparent; border-top: 0; border-bottom: 3px solid #fff; margin-right: 4px; }
.clock { display: flex; flex-direction: column; width: 46px; text-align: center; }
.peek { width: 8px; height: 25px; background: linear-gradient(#9ab2c8, #41607e); border: 1px solid #182c44; }

/* brand card lying over the desktop */
.brand { position: absolute; left: 40.2%; bottom: 5px; width: 200px; height: 100px; display: flex; align-items: flex-start; background: #fff; color: #0b45e8; overflow: hidden; padding: 14px 0 0 6px; gap: 5px; }
.books { position: relative; width: 42px; height: 44px; margin-top: 11px; flex: none; }
.brandtext { position: relative; display: flex; flex-direction: column; }
.brandtext strong { font-family: "Noto Sans CJK SC", sans-serif; font-size: 32px; font-weight: 700; line-height: 44px; padding-left: 15px; }
.brandtext span { font-family: "Noto Sans CJK SC", sans-serif; font-size: 16px; font-weight: 700; line-height: 18px; }
.wm { position: absolute; font-size: 12px; color: #ececec; transform: rotate(-42deg); line-height: 14px; }
.wm.a { left: 0; top: 8px; }
.wm.b { left: 52px; top: 38px; }
.wm.c { left: 6px; top: 79px; }
.wm.d { left: 128px; top: 74px; }
```
FILE: app.js
```js
// Each bar is [high, low, close] in plot units; a bar opens where the last one closed.
const bars = [
[106,163,153],[142,187,162],[162,196,171],[177,196,194],[185,226,221],[199,233,211],[198,229,206],[198,224,219],[193,233,222],[189,231,198],
[187,202,190],[188,219,216],[214,239,220],[204,229,208],[195,214,198],[190,206,198],[197,209,206],[204,219,211],[202,214,203],[193,205,202],
[183,209,204],[189,212,211],[210,222,216],[214,235,232],[214,240,215],[213,222,217],[217,230,227],[218,230,219],[204,222,205],[202,215,211],
[207,216,212],[211,223,221],[203,224,204],[188,245,206],[203,219,216],[207,229,227],[224,236,233],[219,240,220],[218,224,219],[218,225,222],
[220,226,221],[217,225,219],[209,222,209],[206,218,215],[207,219,214],[204,222,207],[200,208,202],[196,205,198],[190,203,194],[189,199,194],
[190,201,199],[183,201,185],[182,191,189],[187,194,188],[185,193,191],[102,194,112],[56,127,67],[15,69,64],[64,84,81],[75,95,92],
[85,99,92],[58,97,61],[32,67,36],[35,46,40],[37,50,39],[34,50,48],[41,51,45],[36,53,50],[50,63,57],[57,91,75],
[64,86,65],[62,83,81],[62,85,81],[66,110,100],[82,108,94],[89,131,128],[108,147,132],[116,142,129],[122,151,139],[137,248,230],
[177,238,190],[162,209,180],[168,200,191],[161,199,166],[138,167,150],[130,152,136],[118,144,142],[138,164,152],[138,159,150],[116,153,123],
[117,148,134],[104,136,132],[127,155,146],[133,159,144],[130,159,141],[127,166,149],[135,182,146],[132,180,168],[157,180,169],[167,199,196],
[174,204,198],[187,226,218],[195,223,208],[186,217,207],[200,238,215],[202,241,226],[206,228,223],[214,243,219],[192,228,195],[186,203,195],
[181,208,191],[185,204,195],[174,205,185],[166,186,177],[177,199,181],[162,190,175],[169,185,181],[172,188,187],[186,197,196],[186,200,189],
[189,205,205],[204,216,211],[203,212,204],[195,210,196],[185,204,197],[197,212,206],[192,209,200],[199,217,207],[196,239,234]
];

let grid = "";
for (let k = 1; k <= 40; k++) grid += `M${(k * 20.47).toFixed(1)} 0V255`;
for (let k = 0; k < 12; k++) grid += `M0 ${Math.round(20 + k * 21.15)}H829`;
let path = "";
let open = 150;
bars.forEach(([h, l, c], i) => {
  const x = 0.5 + Math.round(i * 5.13);
  path += `M${x} ${h}V${l}M${x - 2} ${open + 0.5}H${x}M${x} ${c + 0.5}H${x + 2}`;
  open = c;
});
document.getElementById("price").innerHTML =
  `<path class="gridl" d="${grid}"/><path class="priceline" d="M0 233.5H829"/><path class="bars" d="${path}"/><path d="M659 0h7l-3.500 4z" fill="#9aa8b6"/>`;

// Balance curve, as x,y pairs.
const curve = "0,124 209,124 210,123.500 249,123 274,122.500 294,121.500 314,120.500 327,120 350,120 359,119 367,117.500 379,117 389,117 394,117.500 400,116 409,113.500 420,112 430,110 438,106 444,105.500 450,106.500 456,106 467,103 482,101 489,98.500 499,98 504,97 515,96.500 530,96 540,94.500 547,92 557,90.500 569,89 578,87 590,85 600,82 607,82 617,80.500 627,80 635,77.500 642,76 653,76 657,74 666,74 672,72 679,70.500 685,72 690,70 697,67 707,65 717,63 724,62.500 732,60 744,58 756,55 762,55.500 770,57 777,55 789,52.500 797,49.500 810,46 822,45 829,42 837,40.500 849,36 854,35.500 862,32 869,30 877,28.500 885,27 895,27 907,26 920,22 929,22 937,19.500 945,19 952,17 959,19 965,16.500 972,15.500 979,13";
let light = "";
for (let k = 1; k < 48; k++) light += `M${(k * 20.48).toFixed(1)} 0V126`;
const vertical = light;
for (let k = 0; k < 6; k++) light += `M0 ${Math.round(2 + k * 20.5)}H980`;
document.getElementById("balance").innerHTML =
  `<path class="lightgrid" d="${light}"/><polyline class="curve" points="${curve}"/>`;

const lots = [1,1,1,2,2,2,2,3,3,3,4,4,5,5,6,7,8,9,9,10,9,10,11,13,12,14,15,13];
let sticks = "";
for (let i = 0; i < 117; i++) {
  const height = i < lots.length ? lots[i] : 26;
  sticks += `M${(222.5 + i * 6.52).toFixed(1)} 28V${28 - height}`;
}
document.getElementById("size").innerHTML =
  `<path class="lightgrid" d="${vertical}"/><path class="lots" d="${sticks}"/>`;

const ticks = "0 4 7 10 13 16 19 22 25 29 32 35 38 41 44 47 51 54 57 60".split(" ")
  .concat(Array(10).fill(""), "94 98 101 104 107 110 113 116 120 123 126 129 132 135 138 141 145 148".split(" "));
document.getElementById("ticks").innerHTML = ticks.map(t => `<span>${t}</span>`).join("");

// Market Watch rows: background and direction of the last quote.
const rows = "green dn,green dn,green dn,green up,green dn,green dn,green dn,orange up,yellow dn,grey up,cyan dn,cyan dn,cyan dn,cyan up,cyan dn,cyan up,cyan up,blue dn,cyan up";
document.getElementById("market").innerHTML = '<div class="mrow head"></div>' + rows.split(",").map(r => {
  const [colour, dir] = r.split(" ");
  return `<div class="mrow ${colour}"><svg><use href="#${dir}"/></svg><span></span></div>`;
}).join("");
```
